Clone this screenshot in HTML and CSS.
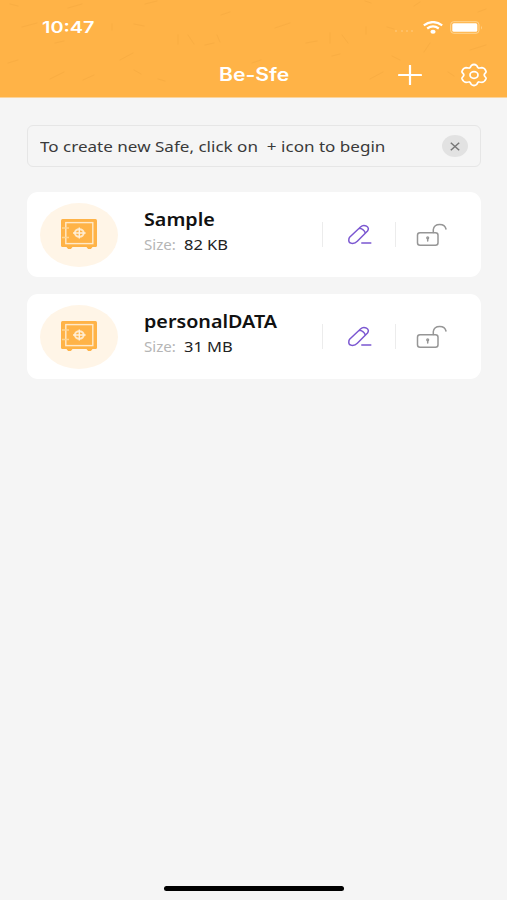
FILE: index.html
```html
<!DOCTYPE html>
<html lang="en">
<head>
<meta charset="utf-8">
<title>Be-Sfe</title>
<link rel="stylesheet" href="styles.css">
</head>
<body>
<svg class="defs" width="0" height="0" aria-hidden="true">
  <symbol id="safe" viewBox="0 0 36 31">
    <rect x="0" y="0" width="36" height="28" rx="1.5" fill="#ffb347"/>
    <path d="M6 28h5l-1 1.500h-3zM26 28h5l-1 1.500h-3z" fill="#ffb347" stroke="#ffb347"/>
    <rect x="4.800" y="3.600" width="27" height="21" fill="none" stroke="#ffe9c9" stroke-width="1.400"/>
    <path d="M1 9h7M1 18.500h7" stroke="#ffd592" stroke-width="1.700"/>
    <ellipse cx="18.300" cy="14" rx="4.400" ry="3.700" fill="none" stroke="#ffe9c9" stroke-width="2"/>
    <path d="M12 14h12.600M18.300 8.500v11" stroke="#fff0d9" stroke-width="1.400"/>
  </symbol>
  <symbol id="edit" viewBox="0 0 26 22">
    <g fill="none" stroke="#7b57d1" stroke-width="1.500" stroke-linecap="round" stroke-linejoin="round">
      <path d="M2.600 13.300 13.500 3Q16.200.500 19.500 2.200 22.600 4 20.500 7L10.300 17.300Q8.300 19.400 5.500 19.400 1.800 19.400 1.800 16.600 1.700 14.400 2.600 13.300ZM12.200 4.300Q16.500 4.600 18.200 8.800M14.800 19h9"/>
    </g>
  </symbol>
  <symbol id="lock" viewBox="0 0 32 24">
    <g fill="none" stroke="#969696" stroke-width="1.500" stroke-linecap="round">
      <rect x="1.500" y="9.800" width="20.500" height="12.500" rx="2.500"/>
      <path d="M17.300 9.500V6.500Q18 1.500 23.800 1.500 29 1.600 30 6"/>
      <path d="M11.700 15v3" stroke-width="1.500"/><circle cx="11.700" cy="14.800" r="1" stroke-width="1.200"/>
    </g>
  </symbol>
</svg>
<header class="header">
  <svg class="pattern" viewBox="0 0 507 97" aria-hidden="true">
    <g fill="none" stroke="#e99e38" stroke-width="1" stroke-linecap="round">
      <path d="M22 27l15-4M55 43l9-2M112 24v6M134 24l10 2M120 60l13-7M18 60l-10 3M50 79l14-7M83 80l11-5M134 70l7 4M158 79l7 2M178 35v9M188 35l6 9M205 45l9-2M217 35l3 7M275 28l15-5M306 43l11-2M330 33v10M342 35l6 8M366 27v7M370 79l13-7M387 27l7 2M400 60l-8-4M424 52l6-9M448 72l6 4M470 50l16-5M488 79l-7 5M261 60l-9 3M340 54l-8 2M365 1l6 2M414 6l6-4M68 8l14-4M145 4l12-3M230 12l-9 3M478 12l8-3M10 4l8 2"/>
    </g>
  </svg>
  <div class="status">
    <span class="stretch time">10:47</span>
    <div class="signals">
      <svg class="dots" viewBox="0 0 24 6"><g fill="#ffd08c"><circle cx="4" cy="3" r=".8"/><circle cx="10" cy="3" r=".8"/><circle cx="15" cy="3" r=".8"/><circle cx="20" cy="3" r=".8"/></g></svg>
      <svg class="wifi" viewBox="0 0 20 13"><g fill="none" stroke="#fff" stroke-width="2.200"><path d="M.800 4.300Q10-2.200 19.200 4.300M4.200 7.500Q10 3.300 15.800 7.500"/></g><ellipse cx="10" cy="10.700" rx="2.600" ry="2" fill="#fff"/></svg>
      <svg class="battery" viewBox="0 0 33 13"><rect x=".7" y=".7" width="28.300" height="11.600" rx="3" fill="none" stroke="#ffd592"/><rect x="2.300" y="2.300" width="25" height="8.400" rx="1.500" fill="#fff"/><path d="M31 4.500q1.500 2 0 4" fill="#ffd592"/></svg>
    </div>
  </div>
  <div class="nav">
    <h1 class="stretch title">Be-Sfe</h1>
    <svg class="plus" viewBox="0 0 24 20"><path d="M1 10h22M12 .500v19" stroke="#fff" stroke-width="2.200" stroke-linecap="round"/></svg>
    <svg class="gear" viewBox="0 0 28 24"><g fill="none" stroke="#fff" stroke-width="1.700" stroke-linejoin="round"><path d="M11.200 2.700Q14 .300 16.800 2.700L18 4.700Q18.600 5.200 19.400 5L22 4.700Q24.800 5 26 8.200 26.300 9.300 25 10.400 23.400 12 25 13.600 26.300 14.700 26 15.800 24.800 19 22 19.300L19.400 19Q18.600 18.800 18 19.300L16.800 21.300Q14 23.700 11.200 21.300L10 19.300Q9.400 18.800 8.600 19L6 19.300Q3.200 19 2 15.800 1.700 14.700 3 13.600 4.600 12 3 10.400 1.700 9.300 2 8.200 3.200 5 6 4.700L8.600 5Q9.400 5.200 10 4.700Z"/><ellipse cx="14" cy="12" rx="4" ry="3.300"/></g></svg>
  </div>
</header>
<main class="content">
  <div class="notice">
    <span class="stretch notice-text">To create new Safe, click on&nbsp; + icon to begin</span>
    <span class="close"><svg viewBox="0 0 10 9"><path d="M.800.800 9.200 8.200M9.200.800.800 8.200" stroke="#777" stroke-width="1.500"/></svg></span>
  </div>
  <section class="card">
    <div class="badge"><svg><use href="#safe"/></svg></div>
    <div class="info">
      <h2 class="stretch name">Sample</h2>
      <div class="meta"><span class="stretch label">Size:</span><span class="stretch value">82 KB</span></div>
    </div>
    <div class="action edit"><svg><use href="#edit"/></svg></div>
    <div class="action lock"><svg><use href="#lock"/></svg></div>
  </section>
  <section class="card">
    <div class="badge"><svg><use href="#safe"/></svg></div>
    <div class="info">
      <h2 class="stretch name">personalDATA</h2>
      <div class="meta"><span class="stretch label">Size:</span><span class="stretch value">31 MB</span></div>
    </div>
    <div class="action edit"><svg><use href="#edit"/></svg></div>
    <div class="action lock"><svg><use href="#lock"/></svg></div>
  </section>
</main>
<div class="home"></div>
</body>
</html>
```
FILE: styles.css
```css
* { box-sizing: border-box; }
body {
  margin: 0;
  height: 900px;
  display: flex;
  flex-direction: column;
  background: #f5f5f5;
  font-family: "Noto Sans", sans-serif;
  color: #3a3a3a;
  overflow: hidden;
}
svg { display: block; flex: none; }
.defs { position: absolute; }
h1, h2 { margin: 0; }
.stretch {
  display: block;
  width: max-content;
  white-space: nowrap;
  transform: scaleX(1.19);
  transform-origin: left center;
}
.header {
  position: relative;
  height: 98px;
  flex: none;
  background: #ffb347;
  border-bottom: 1px solid #fbd49c;
  color: #fff;
  font-family: Inter, sans-serif;
}
.pattern { position: absolute; left: 0; top: 0; width: 507px; height: 97px; opacity: .25; }
.status, .nav { position: relative; display: flex; align-items: center; }
.status { height: 54px; padding: 0 24px 0 42px; justify-content: space-between; }
.time { font-size: 16px; font-weight: 600; line-height: 20px; transform: scaleX(1.24); }
.signals { display: flex; align-items: center; gap: 7px; }
.dots { width: 24px; height: 6px; margin-top: 8px; }
.wifi { width: 20px; height: 13px; }
.battery { width: 33px; height: 13px; }
.nav { height: 41px; padding-right: 19px; justify-content: flex-end; }
.title { margin-right: auto; margin-left: 219px; font-size: 18px; font-weight: 600; line-height: 24px; transform: scaleX(1.175); }
.plus { width: 24px; height: 20px; margin-right: 38px; }
.gear { width: 28px; height: 24px; }
.content { padding: 27px 26px 0 27px; display: flex; flex-direction: column; }
.notice {
  height: 42px;
  margin-bottom: 25px;
  padding: 0 12px;
  display: flex;
  align-items: center;
  justify-content: space-between;
  border: 1px solid #e6e6e6;
  border-radius: 6px;
}
.notice-text { font-size: 15px; line-height: 20px; transform: scaleX(1.137); }
.close { width: 26px; height: 22px; border-radius: 50%; background: #e2e2e2; display: grid; place-items: center; }
.close svg { width: 10px; height: 9px; }
.card {
  height: 85px;
  margin-bottom: 17px;
  padding-left: 13px;
  display: flex;
  align-items: center;
  background: #fff;
  border-radius: 11px;
}
.badge { width: 78px; height: 64px; border-radius: 50%; background: #fff5e7; display: grid; place-items: center; }
.badge svg { width: 36px; height: 31px; }
.info { width: 204px; padding: 0 0 6px 26px; }
.name { font-size: 17px; font-weight: 600; line-height: 26px; color: #111; transform: scaleX(1.16); }
.meta { display: flex; line-height: 24px; font-size: 13.5px; }
.label { width: 39.500px; color: #b5b5b5; transform: scaleX(1.12); }
.value { color: #222; transform: scaleX(1.22); }
.action { height: 25px; border-left: 1px solid #ececec; display: flex; align-items: center; }
.edit { width: 73px; padding-left: 24px; }
.edit svg { width: 26px; height: 22px; }
.lock { padding-left: 20px; }
.lock svg { width: 32px; height: 24px; }
.home { width: 180px; height: 5px; margin: auto auto 9px 164px; border-radius: 3px; background: #000; }
```
